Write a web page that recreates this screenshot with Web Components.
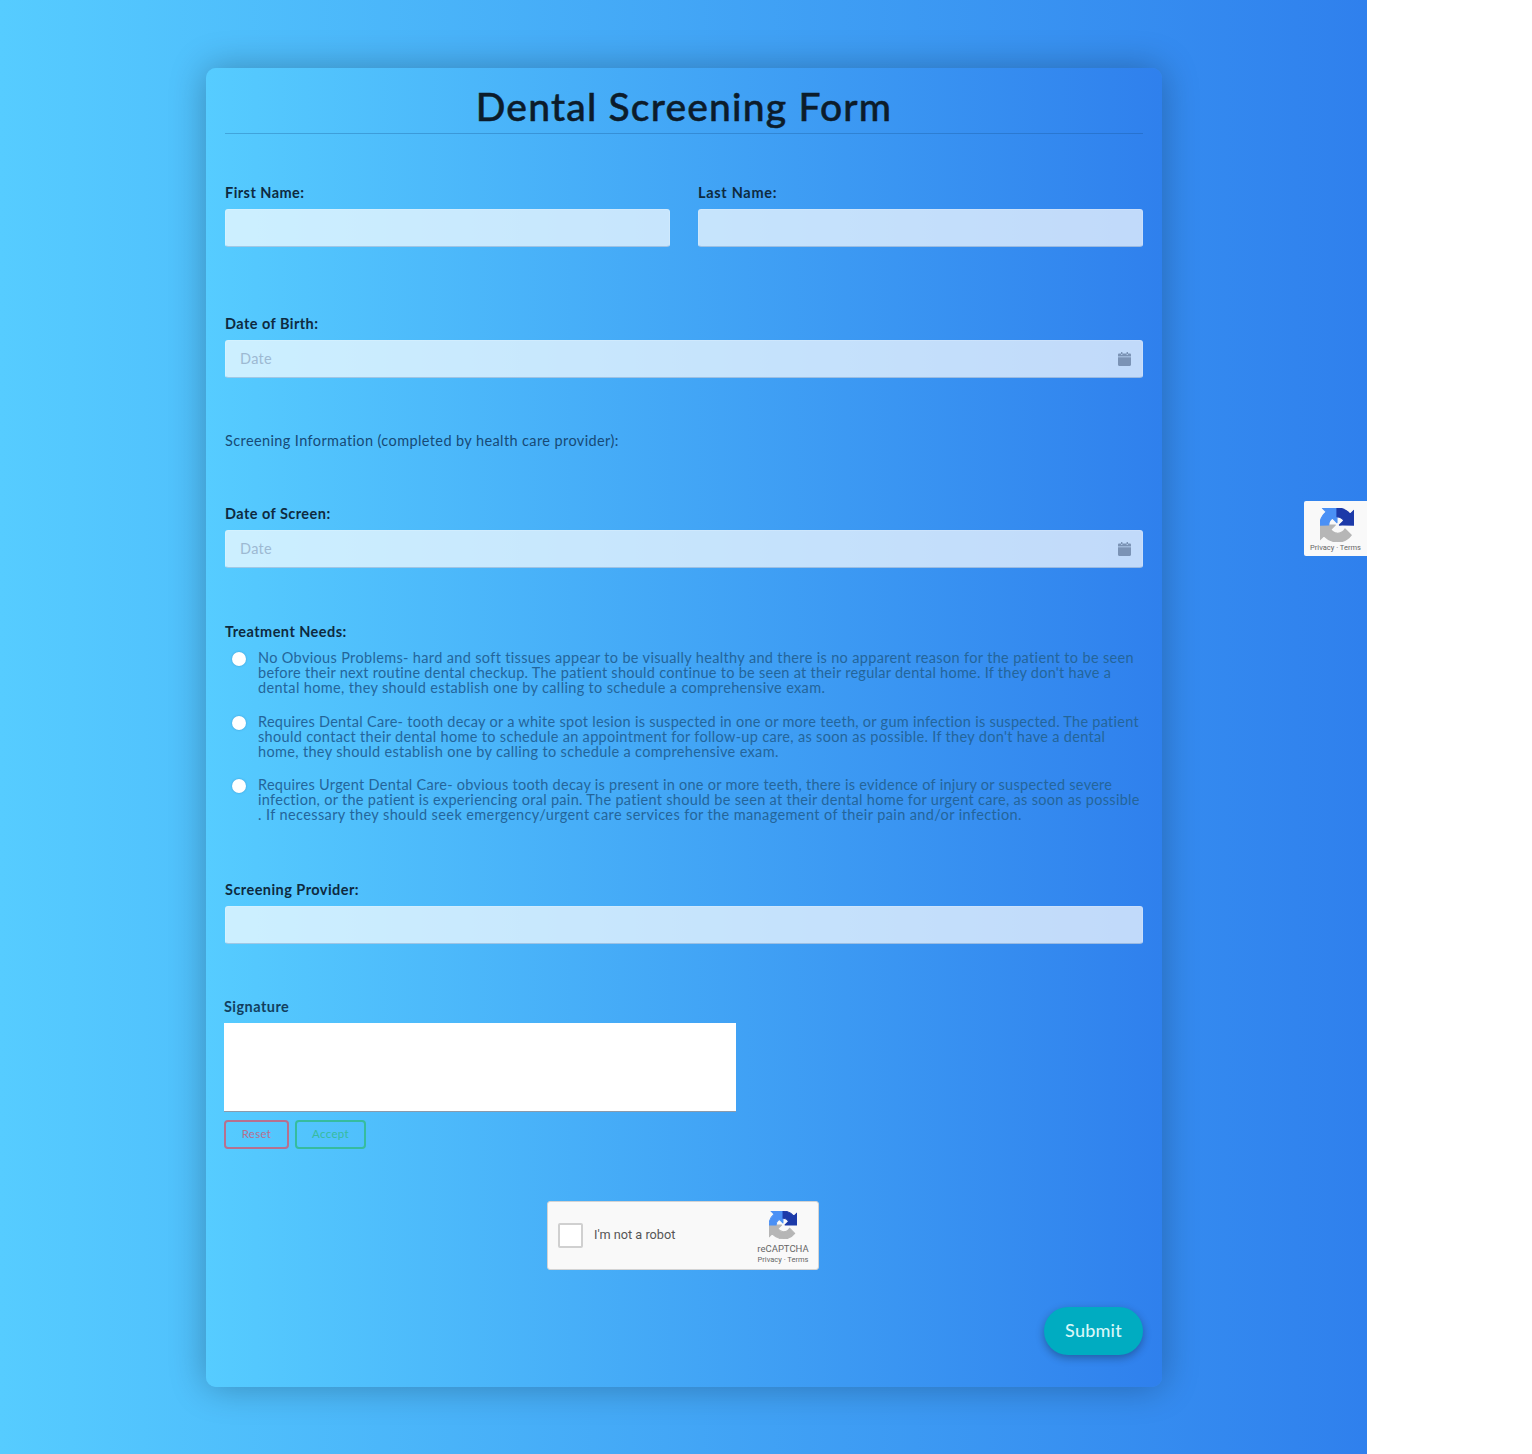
<!DOCTYPE html>
<html lang="en"><head><meta charset="utf-8"><title>Dental Screening Form</title>
<style>
html,body{margin:0;padding:0;background:#fff}
body{font-family:"Lato","Noto Sans",sans-serif;width:1532px;height:1454px;overflow:hidden}
radio-option span{display:block}
</style></head>
<body>
<dental-page>
  <form-card>
    <card-title>Dental Screening Form</card-title>
    <form-row style="margin-top:50px">
      <form-field label="First Name:"></form-field>
      <form-field label="Last Name:" style="letter-spacing:.7px"></form-field>
    </form-row>
    <form-field label="Date of Birth:" date style="margin-top:68px"></form-field>
    <plain-note style="margin-top:54px">Screening Information (completed by health care provider):</plain-note>
    <form-field label="Date of Screen:" date style="margin-top:55px"></form-field>
    <radio-group label="Treatment Needs:" style="margin-top:55px">
      <radio-option><span style="letter-spacing:.34px">No Obvious Problems- hard and soft tissues appear to be visually healthy and there is no apparent reason for the patient to be seen</span><span style="letter-spacing:.266px">before their next routine dental checkup. The patient should continue to be seen at their regular dental home. If they don't have a</span><span style="letter-spacing:.344px">dental home, they should establish one by calling to schedule a comprehensive exam.</span></radio-option>
      <radio-option><span style="letter-spacing:.268px">Requires Dental Care- tooth decay or a white spot lesion is suspected in one or more teeth, or gum infection is suspected. The patient</span><span style="letter-spacing:.32px">should contact their dental home to schedule an appointment for follow-up care, as soon as possible. If they don't have a dental</span><span style="letter-spacing:.333px">home, they should establish one by calling to schedule a comprehensive exam.</span></radio-option>
      <radio-option><span style="letter-spacing:.275px">Requires Urgent Dental Care- obvious tooth decay is present in one or more teeth, there is evidence of injury or suspected severe</span><span style="letter-spacing:.298px">infection, or the patient is experiencing oral pain. The patient should be seen at their dental home for urgent care, as soon as possible</span><span style="letter-spacing:.39px">. If necessary they should seek emergency/urgent care services for the management of their pain and/or infection.</span></radio-option>
    </radio-group>
    <form-field label="Screening Provider:" style="margin-top:59px"></form-field>
    <signature-pad style="margin-top:54px"></signature-pad>
    <captcha-box style="margin-top:52px"></captcha-box>
    <submit-row style="margin-top:37px">Submit</submit-row>
  </form-card>
  <captcha-badge></captcha-badge>
</dental-page>
<script>
const LOGO=`<svg viewBox="0 0 64 64" width="100%" height="100%" aria-hidden="true" stroke-width="2.4" stroke-linejoin="round">
<path d="M.002 32.04l.033 1.37v25.898l7.16-7.16c7.147 7.172 16.06 11.754 26.05 11.754 10.4 0 19.622-4.96 25.458-12.64L46.967 39.4a15.55 15.55 0 0 1-4.754 5.334c-2.05 1.6-4.952 2.906-8.968 2.906-.485 0-.86-.057-1.135-.163-4.976-.393-9.29-3.14-11.83-7.125l8.307-8.307c-10.522.04-22.4.066-27.295-.005" fill="#b6b6b6" stroke="#b6b6b6"/>
<path d="M31.862.094l-1.37.033H4.594l7.16 7.16C4.58 13.147 0 22.06 0 32.046l16.26-.1c0-.485.057-.86.163-1.135.393-4.976 3.14-9.29 7.125-11.83l8.307 8.307c-.04-10.522-.066-22.4.005-27.295" fill="#4a90f5" stroke="#4a90f5"/>
<path d="M64 31.955l-.033-1.37V4.687l-7.16 7.16C50.948 4.674 42.033.093 32.05.093v16.3c.485 0 .86.057 1.135.163 4.976.393 9.29 3.14 11.83 7.125l-8.307 8.307c10.522-.04 22.4-.066 27.295.005" fill="#1c3aa9" stroke="#1c3aa9"/></svg>`;
function def(name,css,html){
  customElements.define(name,class extends HTMLElement{
    connectedCallback(){
      if(this.shadowRoot)return;
      const r=this.attachShadow({mode:"open"});
      const h=typeof html==="function"?html(this):html;
      r.innerHTML=`<style>${css}</style>${h}`;
    }
  });
}
def("dental-page",`:host{display:block;position:relative;width:1367px;height:1454px;box-sizing:border-box;padding-top:68px;background:linear-gradient(to right,#56ccff,#2f80ed)}`,`<slot></slot>`);
def("form-card",`:host{display:block;box-sizing:border-box;width:956px;height:1319px;margin-left:206px;padding:0 19px;border-radius:10px;background:linear-gradient(to right,#56ccff,#2f80ed);box-shadow:0 0 36px rgba(0,0,0,.28)}`,`<slot></slot>`);
def("card-title",`:host{display:block;height:66px;box-sizing:border-box;border-bottom:1px solid rgba(20,80,140,.3);text-align:center;font-size:39px;font-weight:500;line-height:76px;color:#0c1c2b;letter-spacing:1.2px;-webkit-text-stroke:.5px #0c1c2b}`,`<slot></slot>`);
def("form-row",`:host{display:grid;grid-template-columns:445px 445px;gap:28px}`,`<slot></slot>`);
def("form-field",`:host{display:block;letter-spacing:.45px}
label{display:block;height:18px;line-height:18px;margin-bottom:7px;font-size:14.5px;font-weight:700;color:#0e2a40}
.box{position:relative;height:38px;box-sizing:border-box;border:1px solid rgba(255,255,255,.15);border-bottom-color:rgba(60,110,170,.3);border-radius:3px;background:rgba(255,255,255,.7);display:flex;align-items:center;justify-content:space-between;padding:0 11px 0 14px}
input{flex:1;min-width:0;border:0;outline:0;background:none;padding:0 0 1px;font:inherit;font-size:14.5px;letter-spacing:.3px;color:#123}
input::placeholder{color:#9db9d2;opacity:1}
svg{width:13px;height:14px;flex:none;display:block}`,
 t=>`<label>${t.getAttribute("label")}</label><div class="box"><input type="text" ${t.hasAttribute("date")?'placeholder="Date"':''}>${t.hasAttribute("date")?`<svg viewBox="0 0 13 14"><path fill="#7b93b5" d="M3 0h1.4v2H3zM8.6 0H10v2H8.6zM1.2 1.6H3v1.2h1.4V1.6h4.2v1.2H10V1.6h1.8c.7 0 1.2.5 1.2 1.2v1.7H0V2.8c0-.7.5-1.2 1.2-1.2zM0 5.3h13v7.5c0 .7-.5 1.2-1.2 1.2H1.2C.5 14 0 13.5 0 12.8z"/></svg>`:""}</div>`);
def("plain-note",`:host{display:block;height:18px;line-height:18px;font-size:14.5px;color:#174a76;letter-spacing:.39px;white-space:nowrap}`,`<slot></slot>`);
def("radio-group",`:host{display:block}
.l{height:18px;line-height:18px;margin-bottom:9px;font-size:14.5px;font-weight:700;color:#0e2a40;letter-spacing:.45px}
.list{display:flex;flex-direction:column;gap:18.5px}`,
 t=>`<div class="l">${t.getAttribute("label")}</div><div class="list"><slot></slot></div>`);
def("radio-option",`:host{display:flex;gap:12px;padding-left:7px;font-size:14.5px;line-height:15px;color:#24659a;white-space:nowrap}
i{flex:none;width:14px;height:14px;border-radius:50%;background:#fff;box-shadow:0 0 2px rgba(0,60,120,.35);margin-top:2px}
div{display:block}`,`<i></i><div><slot></slot></div>`);
def("signature-pad",`:host{display:block;margin-left:-1px}
label{display:block;height:18px;line-height:18px;margin-bottom:7px;font-size:14.5px;font-weight:700;color:#123f5f;letter-spacing:.45px}
.c{width:512px;height:89px;box-sizing:border-box;background:#fff;border-bottom:1px solid #8a9bac}
.b{display:flex;gap:6px;margin-top:8px}
button{height:29px;box-sizing:border-box;background:transparent;border-radius:4px;font:inherit;font-size:11.5px;letter-spacing:.3px;padding:0 0 2px}
.r{width:65px;border:2px solid #b7708f;color:#b7708f}
.a{width:71px;border:2px solid #36bc9e;color:#36bc9e}`,
 `<label>Signature</label><div class="c"></div><div class="b"><button class="r" type="button">Reset</button><button class="a" type="button">Accept</button></div>`);
def("captcha-box",`:host{display:flex;width:272px;height:69px;box-sizing:border-box;margin-left:322px;background:#f9f9f9;border:1px solid #d3d3d3;border-radius:3px;font-family:Roboto,sans-serif;align-items:center;padding:0 10px}
.cb{width:25px;height:25px;box-sizing:border-box;background:#fff;border:2px solid #d0d0d0;border-radius:2px;flex:none}
.t{margin-left:11px;font-size:12.7px;color:#555;flex:1;white-space:nowrap;margin-top:-2px}
.m{width:54px;display:flex;flex-direction:column;align-items:center;color:#666;margin-right:-2px;padding-top:4px}
.i{width:28px;height:28px}
.n{font-size:9.5px;line-height:11px;margin-top:4px}
.p{font-size:7.5px;line-height:10px;white-space:nowrap;margin-top:1px}`,
 `<div class="cb"></div><div class="t">I'm not a robot</div><div class="m"><div class="i">${LOGO}</div><div class="n">reCAPTCHA</div><div class="p">Privacy · Terms</div></div>`);
def("submit-row",`:host{display:flex;justify-content:flex-end}
button{width:99px;height:48px;border:0;border-radius:24px;background:#00acc1;color:#d8f6f8;font:inherit;font-size:18px;font-weight:500;box-shadow:0 3px 8px rgba(0,0,0,.3);padding:0 0 2px;letter-spacing:.2px}`,`<button type="button"><slot></slot></button>`);
def("captcha-badge",`:host{position:absolute;left:1304px;top:501px;width:63px;height:55px;box-sizing:border-box;background:#f9f9f9;border-radius:2px 0 0 2px;font-family:Roboto,sans-serif;display:flex;flex-direction:column;align-items:center;padding-top:7px;color:#666}
.i{width:34px;height:34px;margin-left:2px}
.p{font-size:7.5px;line-height:10px;margin-top:1px;white-space:nowrap}`,`<div class="i">${LOGO}</div><div class="p">Privacy · Terms</div>`);
</script>
</body></html>
